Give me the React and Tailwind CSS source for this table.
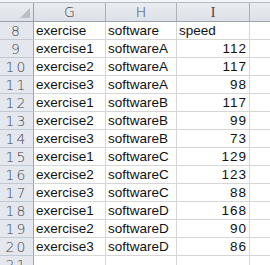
const rows = [
  [8, "exercise", "software", "speed"],
  [9, "exercise1", "softwareA", 112],
  [10, "exercise2", "softwareA", 117],
  [11, "exercise3", "softwareA", 98],
  [12, "exercise1", "softwareB", 117],
  [13, "exercise2", "softwareB", 99],
  [14, "exercise3", "softwareB", 73],
  [15, "exercise1", "softwareC", 129],
  [16, "exercise2", "softwareC", 123],
  [17, "exercise3", "softwareC", 88],
  [18, "exercise1", "softwareD", 168],
  [19, "exercise2", "softwareD", 90],
  [20, "exercise3", "softwareD", 86],
  [21, "", "", ""],
];

export default function App() {
  return (
    <div className="w-[270px] h-[265px] overflow-hidden bg-white text-[#111] font-['Liberation_Sans',sans-serif]">
      <div className="h-[3px] bg-[#f3f5f8] border-b border-[#b6bcc6]" />
      {/* column headers */}
      <div className="flex h-[19px] bg-gradient-to-b from-[#e9ecf0] to-[#dde1e7] border-b border-[#9aa2ad] text-[14px] text-[#444]">
        <div className="relative w-[34px] border-r border-[#9aa2ad]">
          <svg className="absolute right-[3px] bottom-[3px]" width="10" height="10" viewBox="0 0 10 10">
            <polygon points="10,0 10,10 0,10" fill="#b7bec8" />
          </svg>
        </div>
        <div className="w-[72px] border-r border-[#aab1bb] flex items-center justify-center font-['DejaVu_Sans',sans-serif] font-extralight">G</div>
        <div className="w-[71px] border-r border-[#aab1bb] flex items-center justify-center font-['DejaVu_Sans',sans-serif] font-extralight">H</div>
        <div className="w-[73px] border-r border-[#aab1bb] flex items-center justify-center font-['Liberation_Serif',serif]">I</div>
        <div className="flex-1" />
      </div>
      {rows.map(([n, g, h, s]) => (
        <div key={n} className="flex h-[18px] text-[13.5px] leading-none">
          <div className="w-[34px] bg-[#e4e8ee] border-r border-b border-[#9aa2ad] border-b-[#c3c9d2] flex items-center justify-center pt-[1px] text-[14px] tracking-[2px] text-[#444] font-['DejaVu_Sans',sans-serif] font-extralight">
            {n}
          </div>
          <div className="w-[72px] border-r border-b border-[#d6d6d6] flex items-end pl-[2px] pb-[2px]">{g}</div>
          <div className="w-[71px] border-r border-b border-[#d6d6d6] flex items-end pl-[2px] pb-[2px] whitespace-nowrap">{h}</div>
          <div className={"w-[73px] border-r border-b border-[#d6d6d6] flex items-end pb-[2px] " + (typeof s === "number" ? "justify-end pr-[2px] tracking-[1px]" : "pl-[2px]")}>{s}</div>
          <div className="flex-1 border-b border-[#d6d6d6]" />
        </div>
      ))}
    </div>
  );
}
